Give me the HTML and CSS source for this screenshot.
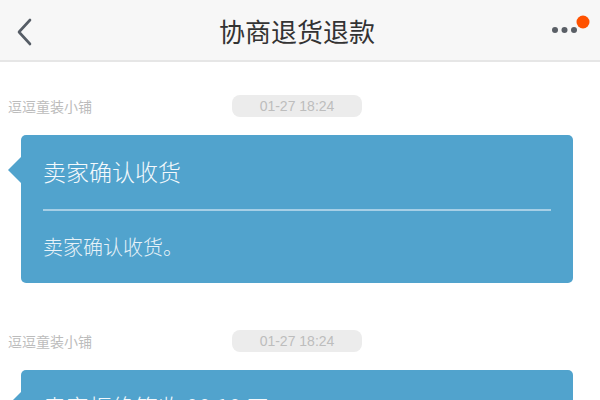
FILE: index.html
```html
<!DOCTYPE html>
<html lang="zh-CN">
<head>
<meta charset="utf-8">
<title>协商退货退款</title>
<link rel="stylesheet" href="styles.css">
</head>
<body>
<header class="navbar">
  <div class="nav-back">
    <svg width="20" height="30" viewBox="0 0 20 30"><path d="M14 4 L3 16 L14 28" fill="none" stroke="#565d66" stroke-width="2.6" stroke-linecap="round" stroke-linejoin="round"/></svg>
  </div>
  <h1 class="nav-title">协商退货退款</h1>
  <div class="nav-more">
    <svg width="50" height="40" viewBox="0 0 50 40"><circle cx="15" cy="20" r="3" fill="#5a5f66"/><circle cx="24.5" cy="20" r="3" fill="#5a5f66"/><circle cx="34" cy="20" r="3" fill="#5a5f66"/><circle cx="43" cy="12" r="6.5" fill="#ff5200"/></svg>
  </div>
</header>
<main class="chat">
  <section class="msg">
    <div class="meta">
      <span class="shop">逗逗童装小铺</span>
      <span class="time">01-27 18:24</span>
      <span></span>
    </div>
    <div class="bubble">
      <div class="bubble-title">卖家确认收货</div>
      <div class="bubble-line"></div>
      <div class="bubble-body">卖家确认收货。</div>
    </div>
  </section>
  <section class="msg">
    <div class="meta">
      <span class="shop">逗逗童装小铺</span>
      <span class="time">01-27 18:24</span>
      <span></span>
    </div>
    <div class="bubble">
      <div class="bubble-title">卖家拒绝签收 00:10 天</div>
      <div class="bubble-line"></div>
      <div class="bubble-body">卖家拒绝签收。</div>
    </div>
  </section>
</main>
</body>
</html>
```
FILE: styles.css
```css
* { box-sizing: border-box; }
html, body { margin: 0; padding: 0; }
body {
  width: 600px;
  height: 400px;
  overflow: hidden;
  background: #ffffff;
  font-family: "Noto Sans CJK SC", "Liberation Sans", sans-serif;
}
.navbar {
  height: 62px;
  background: #f7f7f7;
  border-bottom: 2px solid #e6e6e6;
  display: grid;
  grid-template-columns: 80px 1fr 80px;
  align-items: center;
}
.nav-back {
  padding-left: 16px;
  padding-top: 2px;
  display: flex;
  align-items: center;
}
.nav-title {
  margin: 0;
  text-align: center;
  font-size: 26px;
  font-weight: 400;
  color: #333333;
  line-height: 32px;
  padding-right: 6px;
  padding-top: 2px;
}
.nav-more {
  display: flex;
  justify-content: flex-end;
  padding-right: 10px;
}
.nav-more svg { display: block; }
.chat {
  padding-top: 33px;
}
.msg {
  margin-bottom: 47px;
}
.meta {
  display: grid;
  grid-template-columns: 1fr auto 1fr;
  align-items: center;
  padding-left: 8px;
  padding-right: 14px;
  height: 22px;
}
.shop {
  font-size: 14px;
  color: #bcbcbc;
  line-height: 22px;
}
.time {
  width: 130px;
  height: 22px;
  border-radius: 8px;
  background: #ececec;
  color: #bdbdbd;
  font-family: "Liberation Sans", sans-serif;
  font-size: 14px;
  line-height: 22px;
  text-align: center;
}
.bubble {
  position: relative;
  margin: 18px 27px 0 21px;
  background: #51a3cd;
  border-radius: 5px;
  padding: 22px 22px 23px 22px;
  color: #f4f9fc;
}
.bubble::before {
  content: "";
  position: absolute;
  left: -13px;
  top: 22px;
  border-top: 13px solid transparent;
  border-bottom: 13px solid transparent;
  border-right: 13px solid #51a3cd;
}
.bubble-title {
  font-size: 23px;
  line-height: 28px;
  font-weight: 300;
}
.bubble-line {
  height: 2px;
  background: #a6cfe6;
  margin-top: 24px;
}
.bubble-body {
  margin-top: 23px;
  font-size: 20px;
  line-height: 26px;
  font-weight: 300;
  color: #e8f2f8;
}
```
